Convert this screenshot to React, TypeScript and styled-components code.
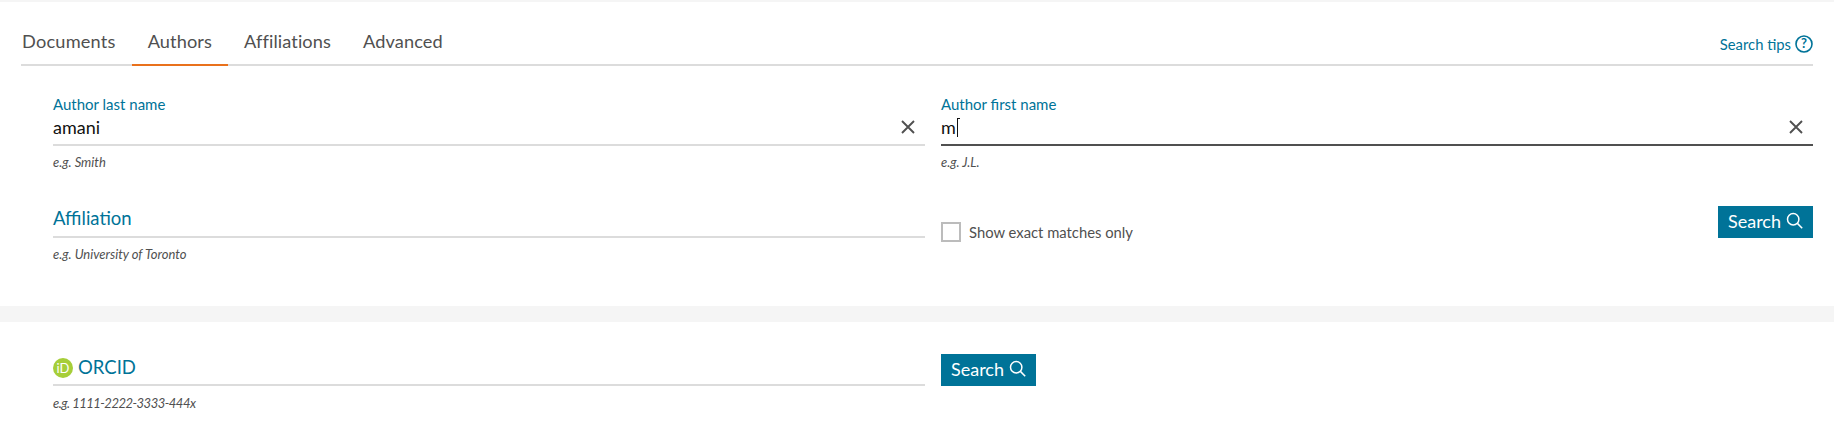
import styled, { createGlobalStyle } from "styled-components";

const Global = createGlobalStyle`
  html, body {
    margin: 0;
    padding: 0;
    background: #fff;
  }
  body {
    font-family: Lato, "Open Sans", sans-serif;
    color: #505050;
  }
`;

const Page = styled.div`
  width: 1834px;
  height: 447px;
  overflow: hidden;
  background: #f5f5f5;
  padding-top: 2px;
  box-sizing: border-box;
`;

const SearchPanel = styled.section`
  height: 304px;
  background: #fff;
  padding: 0 21px;
  box-sizing: border-box;
`;

const OrcidPanel = styled.section`
  height: 125px;
  margin-top: 16px;
  background: #fff;
  padding: 32px 21px 0 53px;
  box-sizing: border-box;
  display: grid;
  grid-template-columns: 872px 95px;
  column-gap: 16px;
  align-items: start;
`;

const TabBar = styled.div`
  height: 64px;
  box-sizing: border-box;
  border-bottom: 2px solid #dcdcdc;
  display: flex;
  align-items: flex-end;
`;

const Tab = styled.div<{ $active?: boolean }>`
  height: 62px;
  box-sizing: border-box;
  padding: 25px 16px 0;
  font-size: 18.2px;
  letter-spacing: 0.1px;
  line-height: 24px;
  color: #505050;
  border-bottom: 2px solid ${(p) => (p.$active ? "#e9711c" : "transparent")};
  margin-bottom: -2px;

  &:first-child {
    padding: 25px 16px 0 1px;
    letter-spacing: 0.2px;
  }
`;

const TipsLink = styled.div`
  margin-left: auto;
  height: 62px;
  box-sizing: border-box;
  padding-top: 33px;
  display: flex;
  align-items: flex-start;
  gap: 4px;
  font-size: 14.8px;
  line-height: 18px;
  color: #007398;
`;

const FormGrid = styled.div`
  display: grid;
  grid-template-columns: 872px 872px;
  column-gap: 16px;
  padding: 30px 0 0 32px;
`;

const Field = styled.div<{ $tall?: boolean }>`
  height: ${(p) => (p.$tall ? "111px" : "auto")};
`;

const FieldLabel = styled.div`
  height: 18px;
  font-size: 15px;
  line-height: 17px;
  color: #007398;
`;

const InputRow = styled.div<{ $focused?: boolean }>`
  height: 32px;
  box-sizing: border-box;
  border-bottom: 2px solid ${(p) => (p.$focused ? "#505050" : "#dcdcdc")};
  display: flex;
  align-items: center;
  justify-content: space-between;
  padding: 0 10px 4px 0;
`;

const InputValue = styled.span`
  font-size: 18px;
  line-height: 22px;
  color: #111;
  display: inline-flex;
  align-items: center;
`;

const Caret = styled.span`
  display: inline-block;
  width: 1px;
  height: 19px;
  background: #111;
  margin-left: 1px;
  position: relative;

  &::after {
    content: "";
    position: absolute;
    top: 0;
    left: 0;
    width: 3px;
    height: 1px;
    background: #111;
  }
`;

const Hint = styled.div<{ $tight?: boolean }>`
  margin-top: ${(p) => (p.$tight ? "9px" : "8px")};
  font-size: 13px;
  line-height: 16px;
  font-style: italic;
  letter-spacing: ${(p) => (p.$tight ? "-0.5px" : "0")};
  color: #505050;
`;

const BigFieldRow = styled.div<{ $tall?: boolean }>`
  height: ${(p) => (p.$tall ? "32px" : "31px")};
  box-sizing: border-box;
  border-bottom: 2px solid #dcdcdc;
  display: flex;
  align-items: flex-start;
  gap: 5px;
  padding-top: ${(p) => (p.$tall ? "2px" : "0")};
`;

const BigLabel = styled.span`
  font-size: 18.5px;
  line-height: 22px;
  color: #007398;
`;

const OptionRow = styled.div`
  display: flex;
  align-items: flex-start;
  justify-content: space-between;
  margin-top: -1px;
`;

const CheckLabel = styled.label`
  display: flex;
  align-items: center;
  gap: 8px;
  margin-top: 16px;
  font-size: 14.8px;
  line-height: 18px;
  color: #505050;
`;

const CheckBox = styled.span`
  display: block;
  width: 20px;
  height: 20px;
  box-sizing: border-box;
  border: 2px solid #bcbcbc;
`;

const SearchButton = styled.button`
  width: 95px;
  height: 32px;
  padding: 0 0 3px;
  border: none;
  background: #007398;
  color: #fff;
  font-family: inherit;
  font-size: 18px;
  line-height: 24px;
  display: flex;
  align-items: center;
  justify-content: center;
  gap: 5px;
`;

const OrcidBadge = styled.span`
  width: 20px;
  height: 20px;
  margin-top: 2px;
  border-radius: 50%;
  background: #a6ce39;
  color: #fff;
  font-size: 13px;
  line-height: 20px;
  text-align: center;
  flex-shrink: 0;
`;

const ClearIcon = () => (
  <svg width="14" height="14" viewBox="0 0 14 14" fill="none" stroke="#505050" strokeWidth="1.9">
    <path d="M1 1l12 12M13 1L1 13" />
  </svg>
);

const SearchIcon = () => (
  <svg width="17" height="17" viewBox="0 0 17 17" fill="none" stroke="#fff" strokeWidth="1.5">
    <circle cx="7.2" cy="7.2" r="5.7" />
    <path d="M11.4 11.4l4.8 4.8" />
  </svg>
);

const HelpIcon = () => (
  <svg width="18" height="18" viewBox="0 0 18 18">
    <circle cx="9" cy="9" r="8" fill="none" stroke="#007398" strokeWidth="1.6" />
    <text x="9" y="13.4" textAnchor="middle" fontSize="13" fontWeight="700" fill="#007398" fontFamily="Lato, sans-serif">
      ?
    </text>
  </svg>
);

const tabs = ["Documents", "Authors", "Affiliations", "Advanced"];

export default function App() {
  return (
    <Page>
      <Global />
      <SearchPanel>
        <TabBar>
          {tabs.map((t) => (
            <Tab key={t} $active={t === "Authors"}>
              {t}
            </Tab>
          ))}
          <TipsLink>
            Search tips <HelpIcon />
          </TipsLink>
        </TabBar>
        <FormGrid>
          <Field $tall>
            <FieldLabel>Author last name</FieldLabel>
            <InputRow>
              <InputValue>amani</InputValue>
              <ClearIcon />
            </InputRow>
            <Hint>e.g. Smith</Hint>
          </Field>
          <Field $tall>
            <FieldLabel>Author first name</FieldLabel>
            <InputRow $focused>
              <InputValue>
                m<Caret />
              </InputValue>
              <ClearIcon />
            </InputRow>
            <Hint>e.g. J.L.</Hint>
          </Field>
          <Field>
            <BigFieldRow>
              <BigLabel>Affiliation</BigLabel>
            </BigFieldRow>
            <Hint>e.g. University of Toronto</Hint>
          </Field>
          <OptionRow>
            <CheckLabel>
              <CheckBox />
              Show exact matches only
            </CheckLabel>
            <SearchButton>
              Search <SearchIcon />
            </SearchButton>
          </OptionRow>
        </FormGrid>
      </SearchPanel>
      <OrcidPanel>
        <Field>
          <BigFieldRow $tall>
            <OrcidBadge>iD</OrcidBadge>
            <BigLabel>ORCID</BigLabel>
          </BigFieldRow>
          <Hint $tight>e.g. 1111-2222-3333-444x</Hint>
        </Field>
        <SearchButton>
          Search <SearchIcon />
        </SearchButton>
      </OrcidPanel>
    </Page>
  );
}
